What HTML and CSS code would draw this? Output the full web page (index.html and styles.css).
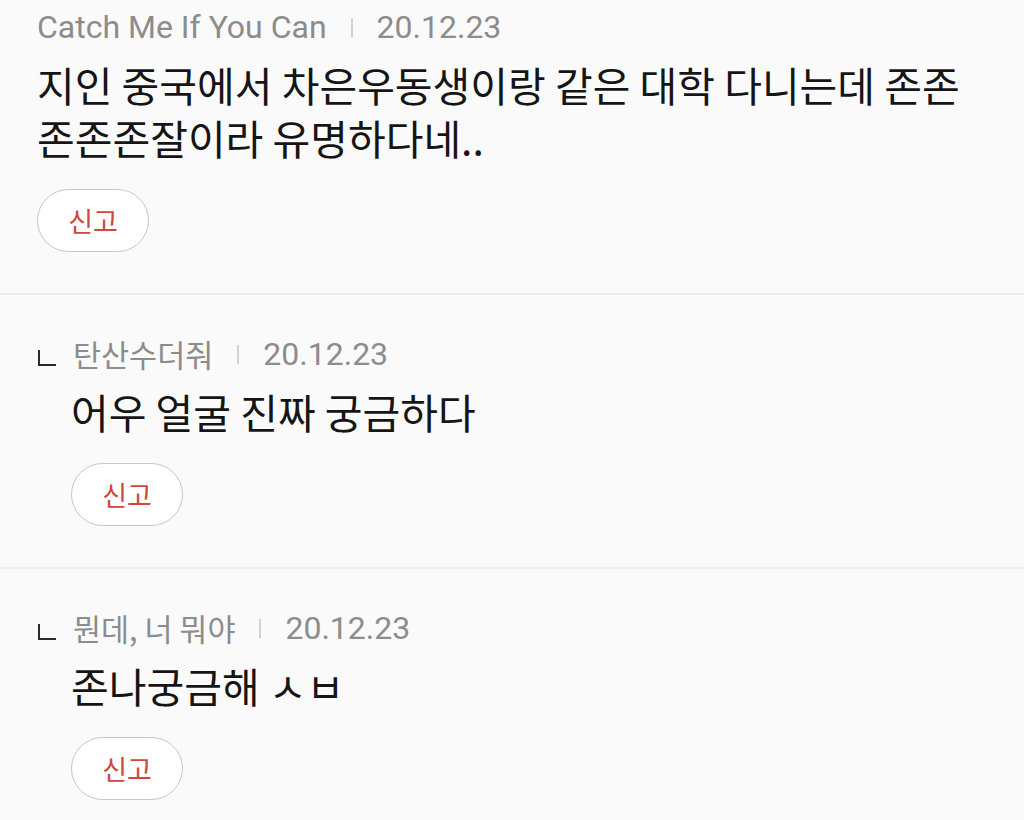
FILE: index.html
```html
<!DOCTYPE html>
<html>
<head>
  <title>댓글</title>
  <link rel="stylesheet" href="styles.css">
</head>
<body>
  <div class="comments">
    <div class="comment first">
      <div class="meta">
        <span class="name">Catch Me If You Can</span>
        <span class="bar"></span>
        <span class="date">20.12.23</span>
      </div>
      <div class="text">지인 중국에서 차은우동생이랑 같은 대학 다니는데 존존존존존잘이라 유명하다네..</div>
      <button class="btn">신고</button>
    </div>

    <div class="comment reply">
      <div class="meta">
        <span class="mark"></span>
        <span class="name ko">탄산수더줘</span>
        <span class="bar"></span>
        <span class="date">20.12.23</span>
      </div>
      <div class="body">
        <div class="text">어우 얼굴 진짜 궁금하다</div>
        <button class="btn">신고</button>
      </div>
    </div>

    <div class="comment reply">
      <div class="meta">
        <span class="mark"></span>
        <span class="name ko">뭔데, 너 뭐야</span>
        <span class="bar"></span>
        <span class="date">20.12.23</span>
      </div>
      <div class="body">
        <div class="text">존나궁금해 ㅅㅂ</div>
        <button class="btn">신고</button>
      </div>
    </div>
  </div>
</body>
</html>
```

FILE: styles.css
```css
body {
  margin: 0;
  background-color: #fafafa;
  font-family: Roboto, "Noto Sans CJK KR", sans-serif;
}

.comment {
  padding: 39px 38px 41px 37px;
  border-bottom: 2px solid #ededed;
}

.comment.first {
  padding-top: 7px;
}

.meta {
  display: flex;
  align-items: center;
  height: 40px;
  font-size: 32px;
  color: #8c8c8c;
}

.name.ko {
  font-family: "Noto Sans CJK KR", sans-serif;
  font-size: 30.5px;
}

.bar {
  width: 2px;
  height: 19px;
  margin: 0 24px;
  background-color: #d2d2d2;
}

.mark {
  width: 16px;
  height: 14px;
  margin: 8px 17px 0 1px;
  border-left: 2px solid #2a2a2a;
  border-bottom: 2px solid #2a2a2a;
}

.text {
  margin-top: 11px;
  font-family: "Noto Sans CJK KR", sans-serif;
  font-size: 41px;
  line-height: 53px;
  color: #151515;
}

.reply .body {
  margin-left: 34px;
}

.btn {
  display: block;
  margin-top: 25px;
  width: 112px;
  height: 63px;
  padding: 0;
  border: 1.5px solid #c6c6c6;
  border-radius: 32px;
  background-color: #fff;
  color: #d0473b;
  font-family: "Noto Sans CJK KR", sans-serif;
  font-size: 27px;
  cursor: pointer;
}
```
